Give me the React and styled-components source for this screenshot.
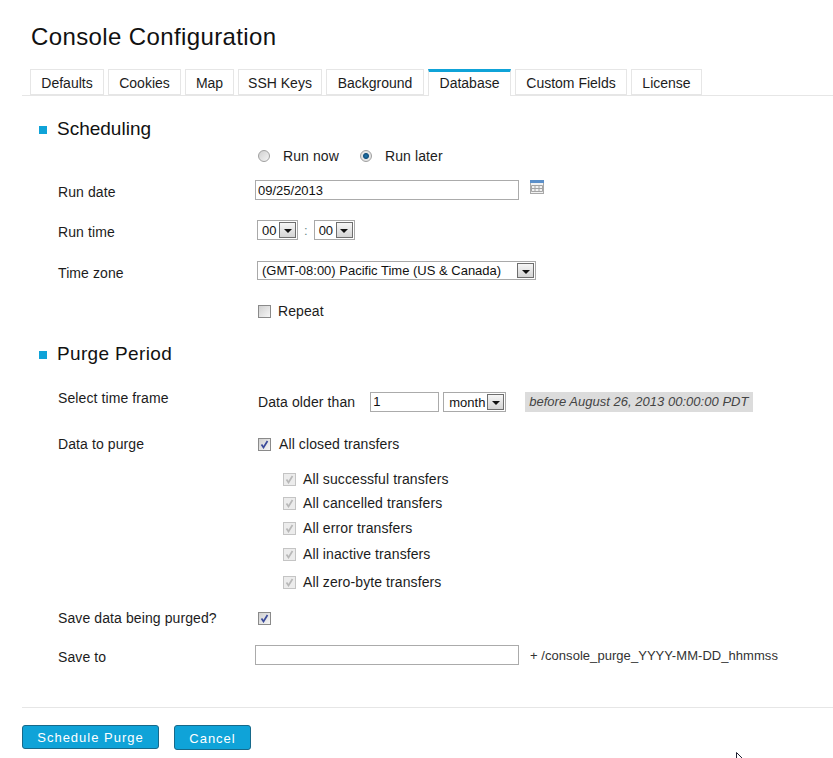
import React from "react";
import styled, { createGlobalStyle } from "styled-components";

const Global = createGlobalStyle`
  html, body { margin: 0; padding: 0; background: #fff; }
  body { font-family: "Liberation Sans", Arial, sans-serif; font-size: 14px; color: #1c1c1c; }
`;

const Page = styled.div`
  position: relative;
  width: 833px;
  height: 758px;
  overflow: hidden;
  padding-left: 22px;
  box-sizing: border-box;
`;
const Title = styled.h1`
  margin: 0;
  padding: 22px 0 0 9px;
  height: 69px;
  box-sizing: border-box;
  font-size: 24px;
  line-height: 30px;
  font-weight: 400;
  letter-spacing: 0.38px;
  color: #111;
`;
const TabBar = styled.div`
  display: flex;
  gap: 4px;
  height: 26px;
  padding-left: 8px;
  border-bottom: 1px solid #e6e6e6;
  box-sizing: content-box;
`;
const Tab = styled.div`
  box-sizing: border-box;
  width: ${(p) => p.$w}px;
  height: ${(p) => (p.$active ? 27 : 26)}px;
  border: 1px solid #e6e6e6;
  border-bottom: ${(p) => (p.$active ? "none" : "1px solid #e6e6e6")};
  border-top: ${(p) => (p.$active ? "3px solid #0fa3d8" : "1px solid #e6e6e6")};
  background: #fff;
  text-align: center;
  line-height: ${(p) => (p.$active ? 22 : 26)}px;
  font-size: 14px;
  white-space: nowrap;
`;
const Section = styled.h2`
  display: flex;
  align-items: center;
  gap: 10px;
  margin: ${(p) => p.$top}px 0 0 17px;
  height: 30px;
  font-size: 19px;
  font-weight: 400;
  letter-spacing: ${(p) => p.$ls || 0}px;
  color: #111;
`;
const Bullet = styled.span`
  width: 8px;
  height: 8px;
  background: #0fa3d8;
  margin-top: 1px;
`;
const Row = styled.div`
  display: grid;
  grid-template-columns: 197px 1fr;
  align-items: center;
  margin-left: 36px;
  height: ${(p) => p.$h}px;
  margin-top: ${(p) => p.$top || 0}px;
`;
const Label = styled.div`
  font-size: 14px;
  letter-spacing: 0.1px;
  position: relative;
  top: ${(p) => p.$shift || 0}px;
  white-space: nowrap;
`;
const Field = styled.div`
  display: flex;
  align-items: center;
  min-width: 0;
`;
const RadioDot = styled.span`
  box-sizing: border-box;
  width: 12px;
  height: 12px;
  border-radius: 50%;
  border: 1px solid #a0a0a0;
  margin: 0 ${(p) => p.$gap}px 0 ${(p) => p.$left}px;
  background: ${(p) =>
    p.$on
      ? "radial-gradient(circle, #1c78b4 0, #14507c 2.5px, #e4e4e4 3.5px)"
      : "linear-gradient(135deg, #d0d0d0, #f4f4f4)"};
`;
const Text = styled.span`
  font-size: 14px;
  letter-spacing: 0.1px;
  white-space: nowrap;
  margin-left: ${(p) => p.$left || 0}px;
`;
const TextInput = styled.input`
  box-sizing: border-box;
  width: ${(p) => p.$w}px;
  height: 20px;
  border: 1px solid #ababab;
  padding: 0 2px;
  margin: 0 0 0 ${(p) => p.$left || 0}px;
  font: 13px "Liberation Sans", Arial, sans-serif;
  color: #111;
  background: #fff;
  outline: none;
`;
const SelectBox = styled.div`
  box-sizing: border-box;
  display: flex;
  align-items: center;
  justify-content: space-between;
  width: ${(p) => p.$w}px;
  height: ${(p) => p.$h || 20}px;
  border: 1px solid #a9a9a9;
  padding: 1px;
  margin-left: ${(p) => p.$left || 0}px;
  background: #fff;
  font-size: 13px;
  color: #111;
`;
const SelectText = styled.span`
  padding-left: ${(p) => p.$pad || 3}px;
  padding-top: ${(p) => p.$drop || 0}px;
  white-space: nowrap;
`;
const Arrow = styled.span`
  box-sizing: border-box;
  flex: none;
  position: relative;
  width: 17px;
  height: 100%;
  border: 1px solid #6e6e6e;
  background: linear-gradient(#f6f6f6, #d4d4d4);
  &::after {
    content: "";
    position: absolute;
    left: 3.5px;
    top: 6px;
    border: 4px solid transparent;
    border-top: 4px solid #111;
    border-bottom: none;
  }
`;
const Colon = styled.span`
  margin: 0 6px 0 6px;
  color: #6b8a8a;
  font-size: 13px;
`;
const CheckBox = styled.span`
  box-sizing: border-box;
  flex: none;
  display: inline-flex;
  align-items: center;
  justify-content: center;
  width: 13px;
  height: 13px;
  border: 1px solid ${(p) => (p.$dim ? "#c4c4c4" : "#8a8a8a")};
  background: ${(p) => (p.$dim ? "#ececec" : "linear-gradient(135deg, #d0d0d0, #f6f6f6)")};
  margin-right: ${(p) => p.$gap}px;
  margin-left: ${(p) => p.$left || 0}px;
`;
const SubList = styled.div`
  margin-left: 261px;
  margin-top: 3px;
`;
const SubItem = styled.div`
  display: flex;
  align-items: center;
  height: 24px;
  margin-top: ${(p) => p.$top || 0}px;
`;
const DateNote = styled.span`
  box-sizing: border-box;
  width: 228px;
  height: 20px;
  line-height: 20px;
  margin-left: 19px;
  padding-left: 4px;
  background: #dcdcdc;
  color: #444;
  font-size: 13px;
  letter-spacing: 0.02px;
  font-style: italic;
  white-space: nowrap;
`;
const Suffix = styled.span`
  font-size: 13px;
  color: #333;
  letter-spacing: 0.05px;
  margin-left: 11px;
  white-space: nowrap;
`;
const Divider = styled.div`
  height: 1px;
  background: #e6e6e6;
  margin-top: 32px;
`;
const Actions = styled.div`
  display: flex;
  align-items: flex-start;
  gap: 15px;
  margin-top: 17px;
`;
const Button = styled.button`
  box-sizing: border-box;
  width: ${(p) => p.$w}px;
  height: ${(p) => p.$h}px;
  padding: ${(p) => p.$drop || 0}px 0 0;
  border: 1px solid #17698a;
  border-radius: 3px;
  background: #0fa3d8;
  color: #fff;
  font: 13px "Liberation Sans", Arial, sans-serif;
  letter-spacing: 1px;
`;
const Pointer = styled.svg`
  position: absolute;
  left: 736px;
  top: 752px;
`;

function Check({ color }) {
  return (
    <svg width="9" height="9" viewBox="0 0 9 9">
      <path d="M1.5 4.5 L3.5 7.5 L7.5 1" fill="none" stroke={color} strokeWidth="1.7" />
    </svg>
  );
}

function CalendarIcon() {
  return (
    <svg width="14" height="14" viewBox="0 0 14 14" style={{ margin: "0 0 6px 11px" }}>
      <rect x="0.5" y="0.5" width="13" height="13" fill="#f2f2f2" stroke="#a8a8a8" />
      <rect x="0" y="0" width="14" height="3" fill="#5b8fc9" />
      <path d="M1.5 5.5H12.5V11.5H1.5ZM1.5 8.5H12.5M5 5.5V11.5M9 5.5V11.5" fill="none" stroke="#a4a4a4" />
    </svg>
  );
}

const tabs = [
  ["Defaults", 74], ["Cookies", 73], ["Map", 49], ["SSH Keys", 84], ["Background", 98],
  ["Database", 83], ["Custom Fields", 112], ["License", 71],
];

const subs = [
  ["All successful transfers", 0],
  ["All cancelled transfers", 0],
  ["All error transfers", 1],
  ["All inactive transfers", 2],
  ["All zero-byte transfers", 4],
];

export default function App() {
  return (
    <Page>
      <Global />
      <Title>Console Configuration</Title>
      <TabBar>
        {tabs.map(([name, w]) => (
          <Tab key={name} $w={w} $active={name === "Database"}>{name}</Tab>
        ))}
      </TabBar>

      <Section $top={18}><Bullet />Scheduling</Section>
      <Row $h={24}>
        <span />
        <Field>
          <RadioDot $left={3} $gap={13} />
          <Text>Run now</Text>
          <RadioDot $left={21} $gap={13} $on />
          <Text>Run later</Text>
        </Field>
      </Row>
      <Row $h={40} $top={2}>
        <Label $shift={2}>Run date</Label>
        <Field>
          <TextInput $w={264} readOnly value="09/25/2013" />
          <CalendarIcon />
        </Field>
      </Row>
      <Row $h={40}>
        <Label $shift={2}>Run time</Label>
        <Field>
          <SelectBox $w={41} $left={2}><SelectText>00</SelectText><Arrow /></SelectBox>
          <Colon>:</Colon>
          <SelectBox $w={41}><SelectText>00</SelectText><Arrow /></SelectBox>
        </Field>
      </Row>
      <Row $h={41}>
        <Label $shift={2}>Time zone</Label>
        <Field>
          <SelectBox $w={279} $left={2} $h={19}>
            <SelectText $pad={3}>(GMT-08:00) Pacific Time (US &amp; Canada)</SelectText>
            <Arrow />
          </SelectBox>
        </Field>
      </Row>
      <Row $h={40}>
        <span />
        <Field>
          <CheckBox $left={3} $gap={7} />
          <Text>Repeat</Text>
        </Field>
      </Row>

      <Section $top={8} $ls={0.35}><Bullet />Purge Period</Section>
      <Row $h={41} $top={12}>
        <Label $shift={-4}>Select time frame</Label>
        <Field>
          <Text $left={3}>Data older than</Text>
          <TextInput $w={69} $left={15} readOnly value="1" />
          <SelectBox $w={63} $left={4}>
            <SelectText $pad={4} $drop={1}>month</SelectText>
            <Arrow />
          </SelectBox>
          <DateNote>before August 26, 2013 00:00:00 PDT</DateNote>
        </Field>
      </Row>
      <Row $h={40} $top={2}>
        <Label>Data to purge</Label>
        <Field>
          <CheckBox $left={3} $gap={8}><Check color="#3a4a9a" /></CheckBox>
          <Text>All closed transfers</Text>
        </Field>
      </Row>
      <SubList>
        {subs.map(([s, top]) => (
          <SubItem key={s} $top={top}>
            <CheckBox $left={0} $dim $gap={7}><Check color="#b8b8b8" /></CheckBox>
            <Text>{s}</Text>
          </SubItem>
        ))}
      </SubList>
      <Row $h={40} $top={4}>
        <Label>Save data being purged?</Label>
        <Field>
          <CheckBox $left={3} $gap={8}><Check color="#3a4a9a" /></CheckBox>
        </Field>
      </Row>
      <Row $h={40} $top={-3}>
        <Label $shift={2}>Save to</Label>
        <Field>
          <TextInput $w={264} readOnly value="" />
          <Suffix>+ /console_purge_YYYY-MM-DD_hhmmss</Suffix>
        </Field>
      </Row>

      <Divider />
      <Actions>
        <Button $w={137} $h={24}>Schedule Purge</Button>
        <Button $w={77} $h={25} $drop={2}>Cancel</Button>
      </Actions>
      <Pointer width="10" height="6" viewBox="0 0 10 6">
        <path d="M0.5 0.5V6M0.5 0.5L6 6" stroke="#223" fill="none" />
      </Pointer>
    </Page>
  );
}
